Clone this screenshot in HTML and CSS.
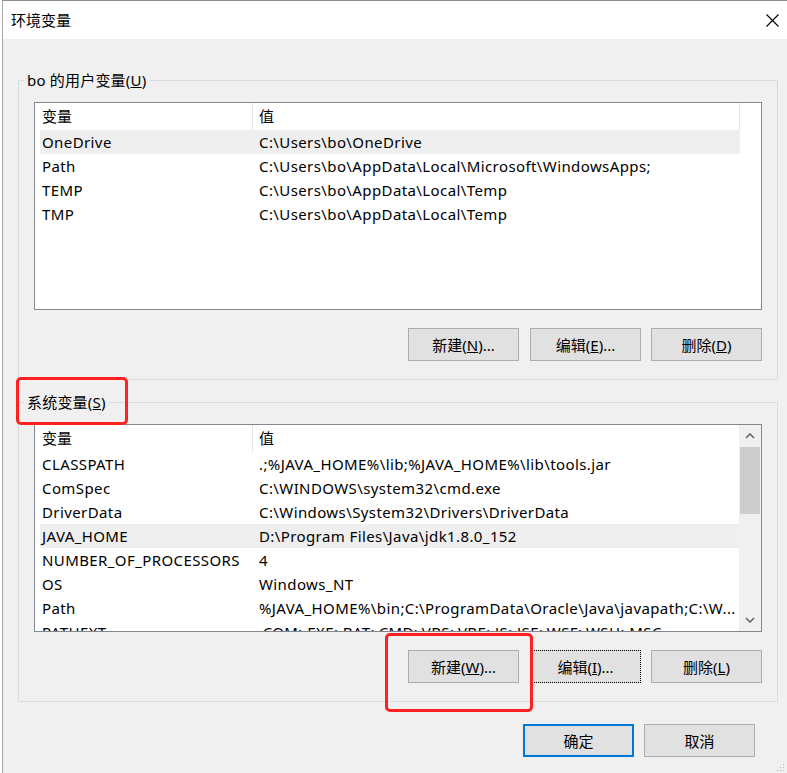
FILE: index.html
```html
<!DOCTYPE html>
<html lang="zh-CN">
<head>
    <meta charset="UTF-8">
    <title>环境变量</title>
    <link rel="stylesheet" href="styles.css">
</head>
<body>
    <div class="window">
        <div class="titlebar">
            <span class="title">环境变量</span>
            <span class="close">
                <svg width="13" height="13" viewBox="0 0 13 13">
                    <path d="M0.5 0.5 L12.5 12.5 M12.5 0.5 L0.5 12.5" stroke="#000" stroke-width="1.1" fill="none"/>
                </svg>
            </span>
        </div>

        <fieldset class="group first">
            <legend>bo 的用户变量(<u>U</u>)</legend>
            <div class="listview">
                <div class="lv-main">
                    <div class="lv-header">
                        <div class="h-name">变量</div>
                        <div class="h-value split">值</div>
                        <div class="h-rest"></div>
                    </div>
                    <div class="row hover"><span class="c-name">OneDrive</span><span class="c-value">C:\Users\bo\OneDrive</span></div>
                    <div class="row"><span class="c-name">Path</span><span class="c-value">C:\Users\bo\AppData\Local\Microsoft\WindowsApps;</span></div>
                    <div class="row"><span class="c-name">TEMP</span><span class="c-value">C:\Users\bo\AppData\Local\Temp</span></div>
                    <div class="row"><span class="c-name">TMP</span><span class="c-value">C:\Users\bo\AppData\Local\Temp</span></div>
                </div>
            </div>
            <div class="btn-row">
                <button class="btn">新建(<u>N</u>)...</button>
                <button class="btn">编辑(<u>E</u>)...</button>
                <button class="btn">删除(<u>D</u>)</button>
            </div>
        </fieldset>

        <fieldset class="group second">
            <legend>系统变量(<u>S</u>)</legend>
            <div class="listview">
                <div class="lv-main">
                    <div class="lv-header">
                        <div class="h-name">变量</div>
                        <div class="h-value">值</div>
                    </div>
                    <div class="row"><span class="c-name">CLASSPATH</span><span class="c-value">.;%JAVA_HOME%\lib;%JAVA_HOME%\lib\tools.jar</span></div>
                    <div class="row"><span class="c-name">ComSpec</span><span class="c-value">C:\WINDOWS\system32\cmd.exe</span></div>
                    <div class="row"><span class="c-name">DriverData</span><span class="c-value">C:\Windows\System32\Drivers\DriverData</span></div>
                    <div class="row hover"><span class="c-name">JAVA_HOME</span><span class="c-value">D:\Program Files\Java\jdk1.8.0_152</span></div>
                    <div class="row"><span class="c-name">NUMBER_OF_PROCESSORS</span><span class="c-value">4</span></div>
                    <div class="row"><span class="c-name">OS</span><span class="c-value">Windows_NT</span></div>
                    <div class="row"><span class="c-name">Path</span><span class="c-value">%JAVA_HOME%\bin;C:\ProgramData\Oracle\Java\javapath;C:\W...</span></div>
                    <div class="row"><span class="c-name">PATHEXT</span><span class="c-value">.COM;.EXE;.BAT;.CMD;.VBS;.VBE;.JS;.JSE;.WSF;.WSH;.MSC</span></div>
                </div>
                <div class="scrollbar">
                    <div class="sb-arrow">
                        <svg width="10" height="6" viewBox="0 0 10 6"><path d="M1 5 L5 1 L9 5" stroke="#606060" stroke-width="1.5" fill="none"/></svg>
                    </div>
                    <div class="sb-thumb"></div>
                    <div class="sb-track"></div>
                    <div class="sb-arrow">
                        <svg width="10" height="6" viewBox="0 0 10 6"><path d="M1 1 L5 5 L9 1" stroke="#606060" stroke-width="1.5" fill="none"/></svg>
                    </div>
                </div>
            </div>
            <div class="btn-row">
                <button class="btn">新建(<u>W</u>)...</button>
                <button class="btn focused">编辑(<u>I</u>)...</button>
                <button class="btn">删除(<u>L</u>)</button>
            </div>
        </fieldset>

        <div class="footer">
            <button class="btn default">确定</button>
            <button class="btn">取消</button>
        </div>

        <svg class="grip" width="8" height="8" viewBox="0 0 8 8">
            <rect x="6" y="0" width="1" height="1" fill="#b0b0b0"/>
            <rect x="3" y="3" width="1" height="1" fill="#b0b0b0"/>
            <rect x="6" y="3" width="1" height="1" fill="#b0b0b0"/>
            <rect x="0" y="6" width="1" height="1" fill="#b0b0b0"/>
            <rect x="3" y="6" width="1" height="1" fill="#b0b0b0"/>
            <rect x="6" y="6" width="1" height="1" fill="#b0b0b0"/>
        </svg>
    </div>

    <!-- annotation marks from the screenshot -->
    <div class="mark mark-label"></div>
    <div class="mark mark-button"></div>
</body>
</html>
```

FILE: styles.css
```css
:root {
    --face: #f0f0f0;
    --btn: #e1e1e1;
    --btn-border: #adadad;
    --list-border: #828790;
    --hover: #efefef;
    --mark: #ff2020;
}

* {
    box-sizing: border-box;
}

body {
    margin: 0;
    background: #fff;
    font-family: "Noto Sans", "Noto Sans CJK SC", sans-serif;
    font-size: 15px;
    color: #000;
}

.window {
    position: relative;
    margin-left: 2px;
    height: 773px;
    background: var(--face);
    border-left: 1px solid #a6a6a6;
    border-top: 1px solid #8c8c8c;
    overflow: hidden;
}

.titlebar {
    height: 38px;
    background: #fff;
    display: flex;
    align-items: center;
    justify-content: space-between;
    padding: 0 8px;
}

.title {
    line-height: 38px;
}

.close {
    display: flex;
}

.group {
    margin: 0 9px 0 15px;
    padding: 12px 15px 18px;
    border: 1px solid #dcdcdc;
    min-width: 0;
}

.group.first {
    margin-top: 31px;
}

.group.second {
    margin-top: 12px;
    padding-bottom: 18px;
}

.group legend {
    margin-left: -10px;
    padding: 0 3px;
    line-height: 20px;
    letter-spacing: 0.2px;
}

.listview {
    height: 208px;
    background: #fff;
    border: 1px solid var(--list-border);
    display: flex;
    overflow: hidden;
}

.lv-main {
    flex: 1;
    min-width: 0;
}

.lv-header {
    display: flex;
    height: 27px;
    line-height: 27px;
}

.h-name {
    width: 218px;
    padding-left: 7px;
    border-right: 1px solid #e5e5e5;
}

.h-value {
    flex: 1;
    padding-left: 6px;
}

.h-value.split {
    flex: none;
    width: 487px;
    border-right: 1px solid #e5e5e5;
}

.h-rest {
    flex: 1;
}

.row {
    display: flex;
    height: 24px;
    line-height: 24px;
    margin-left: 5px;
    white-space: nowrap;
    letter-spacing: 0.4px;
}

.first .row {
    width: 700px;
}

.row.hover {
    background: var(--hover);
}

.c-name {
    width: 217px;
    padding-left: 2px;
    flex: none;
}

.c-value {
    padding-left: 2px;
    overflow: hidden;
}

.scrollbar {
    width: 22px;
    background: var(--face);
    display: flex;
    flex-direction: column;
}

.sb-arrow {
    height: 22px;
    display: flex;
    align-items: center;
    justify-content: center;
}

.sb-thumb {
    height: 67px;
    margin: 0 1px;
    background: #cdcdcd;
}

.sb-track {
    flex: 1;
}

.btn-row {
    display: flex;
    justify-content: flex-end;
    gap: 10px;
    margin-top: 18px;
}

.btn-row .btn:first-child {
    margin-right: 1px;
}

.btn {
    width: 111px;
    height: 33px;
    padding: 0;
    background: var(--btn);
    border: 1px solid var(--btn-border);
    font-family: inherit;
    font-size: 15px;
    color: #000;
}

.btn.focused {
    border: 1px dotted #000;
}

.btn.default {
    border: 2px solid #0078d7;
}

.footer {
    display: flex;
    justify-content: flex-end;
    gap: 10px;
    margin-top: 22px;
    padding-right: 32px;
}

.grip {
    position: absolute;
    right: 2px;
    bottom: 1px;
}

.mark {
    position: absolute;
    border: 3px solid var(--mark);
    border-radius: 5px;
}

.mark-label {
    left: 16px;
    top: 377px;
    width: 112px;
    height: 48px;
}

.mark-button {
    left: 385px;
    top: 633px;
    width: 148px;
    height: 79px;
}
```
